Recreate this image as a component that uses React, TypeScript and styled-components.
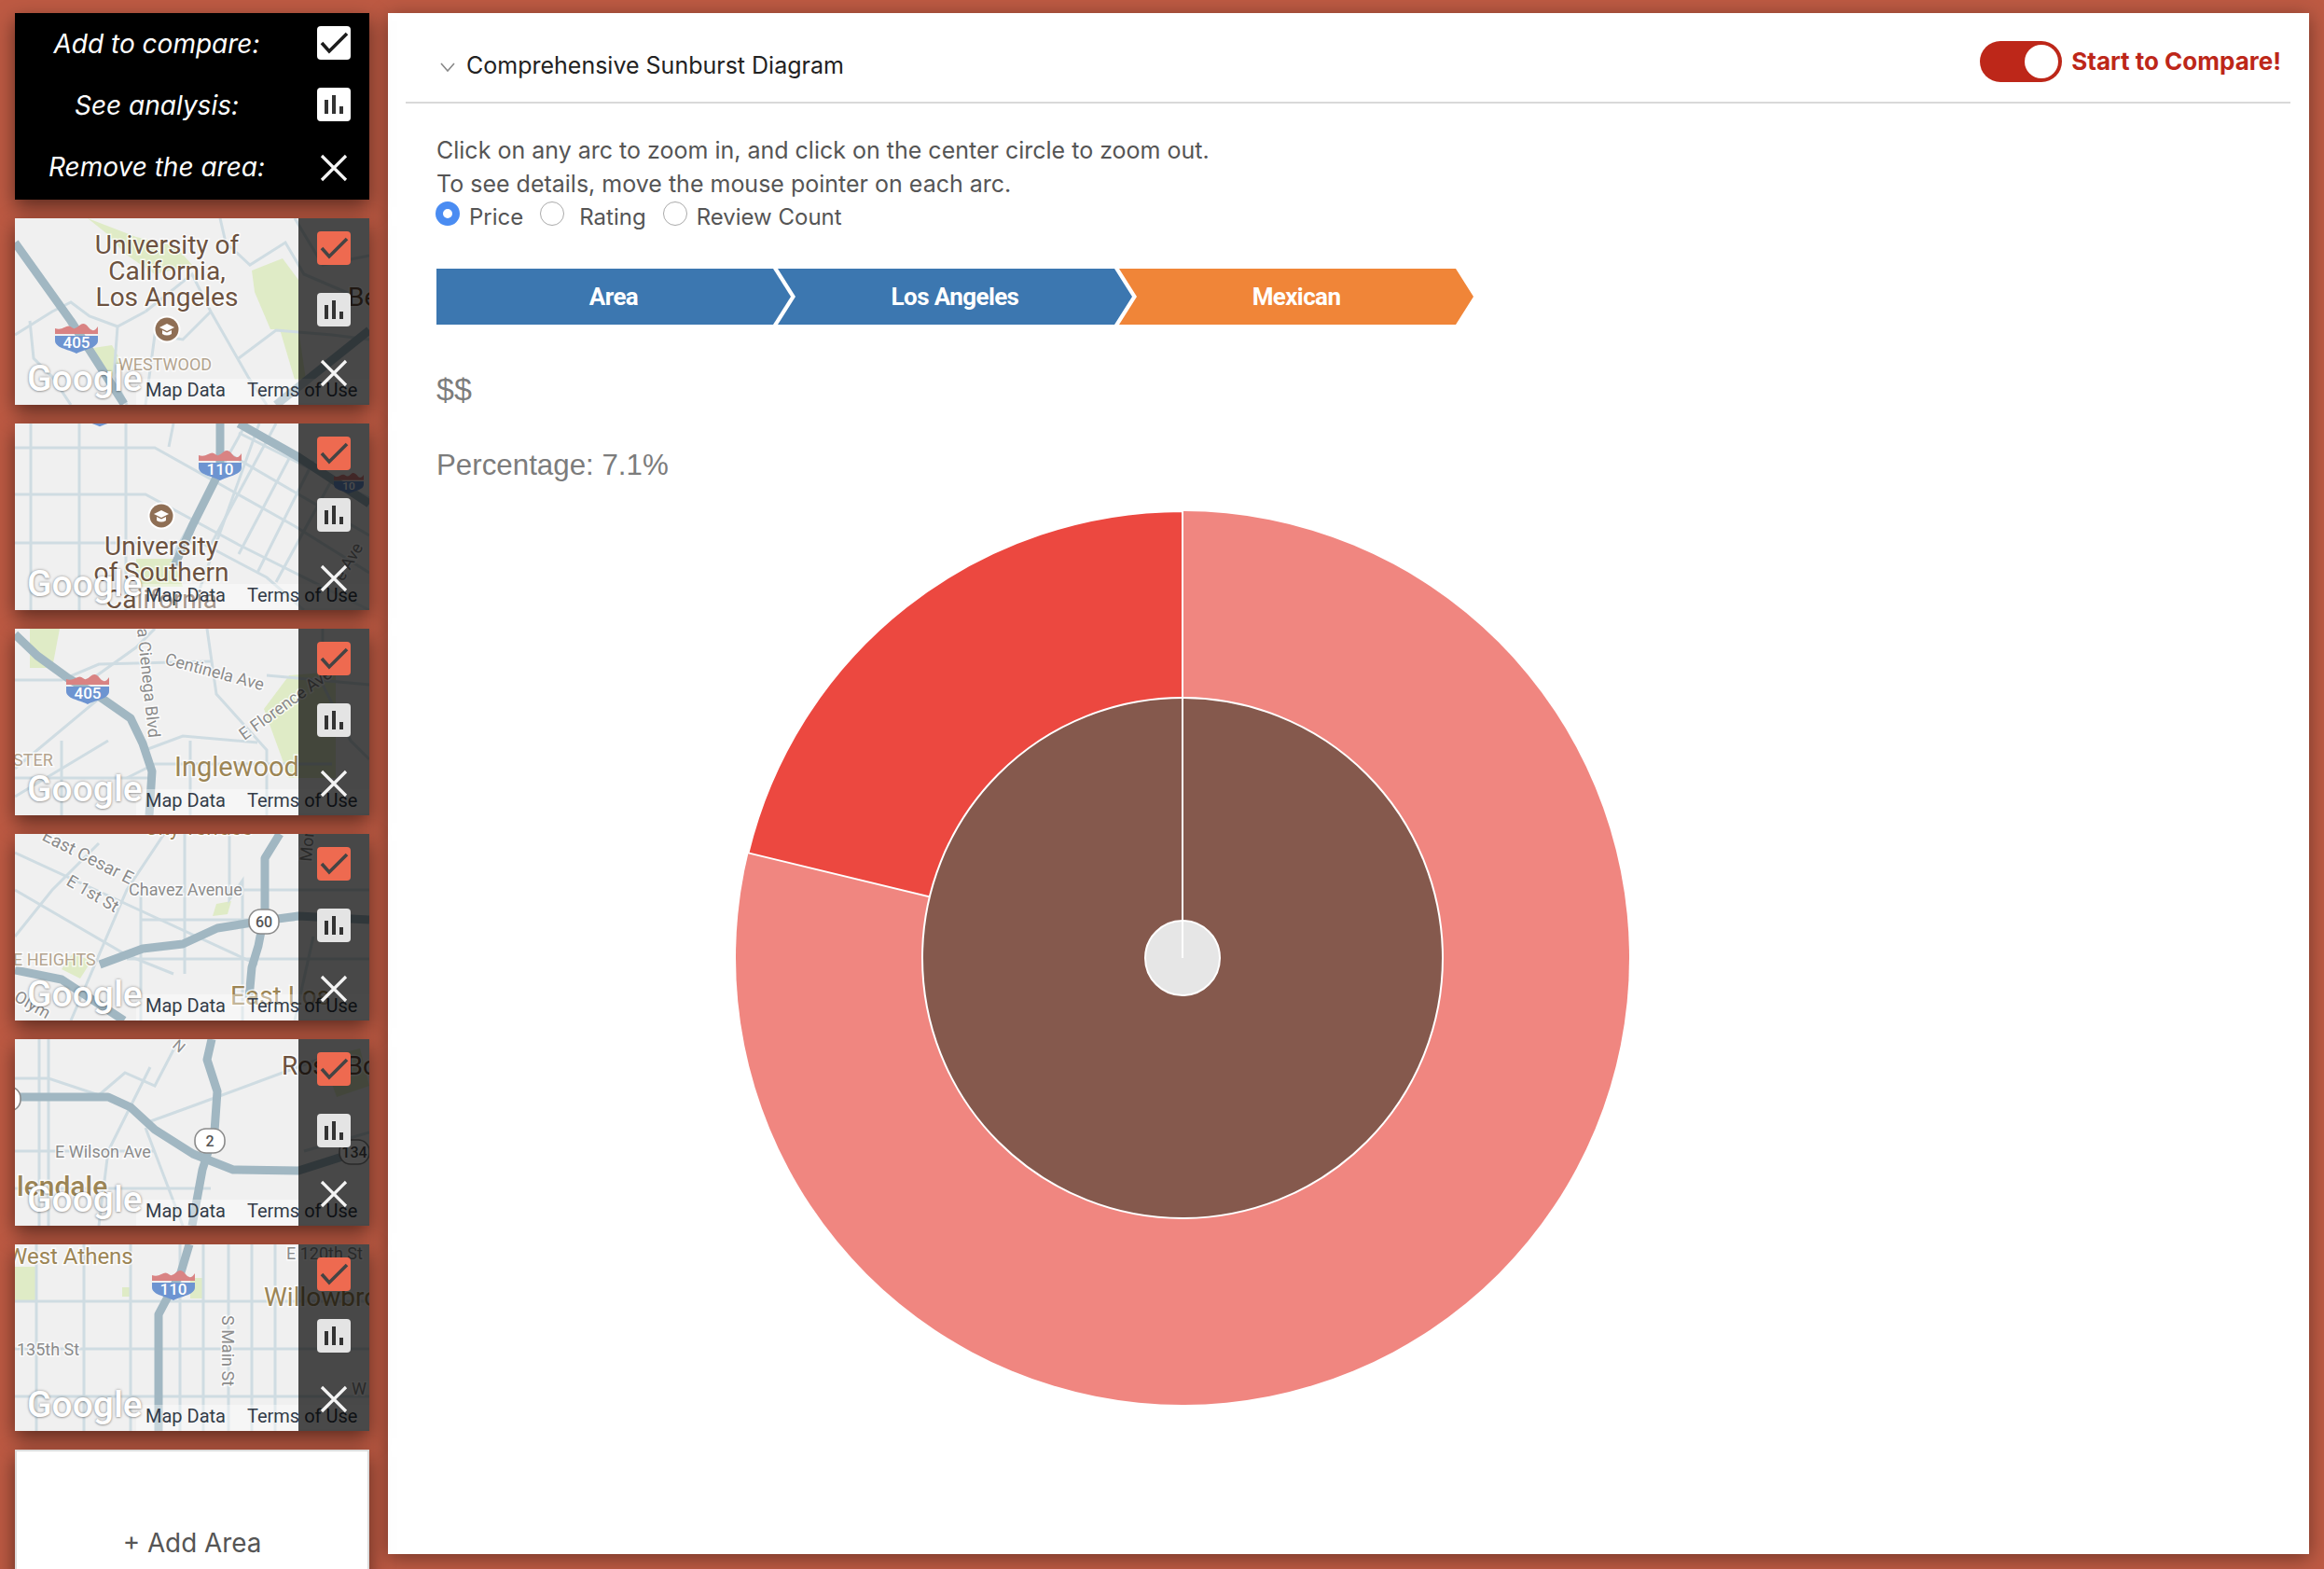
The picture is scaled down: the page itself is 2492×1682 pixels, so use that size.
import React from 'react';
import styled, { createGlobalStyle } from 'styled-components';

const GlobalStyle = createGlobalStyle`
  html, body { margin: 0; padding: 0; background: #bd5a43; }
  body { font-family: Inter, "Liberation Sans", sans-serif; }
`;

const Page = styled.div`
  width: 2492px;
  height: 1682px;
  overflow: hidden;
  box-sizing: border-box;
  padding: 14px 16px;
  display: flex;
  align-items: flex-start;
  gap: 20px;
  background: #bd5a43;
`;

const Sidebar = styled.aside`
  width: 380px;
  flex-shrink: 0;
  display: flex;
  flex-direction: column;
  gap: 20px;
`;

const Tile = styled.div`
  position: relative;
  width: 380px;
  height: 200px;
  flex-shrink: 0;
  overflow: hidden;
  box-shadow: 0 8px 20px rgba(0, 0, 0, 0.5);
`;

const Legend = styled(Tile)`
  background: #000;
  display: flex;
`;

const LegendLabels = styled.div`
  flex: 1;
  padding-top: 15px;
  display: flex;
  flex-direction: column;
  gap: 30px;
`;

const LegendLabel = styled.div`
  height: 36px;
  line-height: 36px;
  text-align: center;
  color: #fff;
  font-style: italic;
  font-size: 28px;
`;

const Actions = styled.div<{ $overlay?: boolean }>`
  width: 76px;
  box-sizing: border-box;
  padding-top: 14px;
  display: flex;
  flex-direction: column;
  align-items: center;
  gap: 30px;
  ${(p) =>
    p.$overlay &&
    `position: absolute;
     top: 0;
     right: 0;
     bottom: 0;
     background: rgba(0, 0, 0, 0.7);`}
`;

const ActionButton = styled.div<{ $bg: string }>`
  width: 36px;
  height: 36px;
  border-radius: 4px;
  background: ${(p) => p.$bg};
  flex-shrink: 0;
`;

const ActionIcon = styled.svg`
  display: block;
  width: 36px;
  height: 36px;
  flex-shrink: 0;
`;

const CloseGlyph = styled(ActionIcon)`
  margin-top: 2px;
`;

const AddCard = styled(Tile)`
  box-sizing: border-box;
  background: #fff;
  border: 2px solid #ddd;
  display: flex;
  align-items: center;
  justify-content: center;
  color: #555;
  font-size: 27.8px;
`;

const MapSvg = styled.svg`
  display: block;
  width: 380px;
  height: 200px;
  background: #f0f0f0;
`;

const Road = styled.path`
  fill: none;
  stroke: #cfdce2;
  stroke-width: 3;
`;

const Freeway = styled.path`
  fill: none;
  stroke: #a1b7c2;
  stroke-width: 9;
  stroke-linejoin: round;
`;

const Park = styled.path`
  fill: #dfebc6;
`;

const tones = {
  place: '#6c5240',
  town: '#9c8555',
  hood: '#b3a48e',
  street: '#8b8b8b',
};

const Label = styled.text<{ $size: number; $tone: keyof typeof tones; $heavy?: boolean }>`
  font-family: Roboto, "Liberation Sans", sans-serif;
  font-size: ${(p) => p.$size}px;
  font-weight: ${(p) => (p.$heavy ? 500 : 400)};
  fill: ${(p) => tones[p.$tone]};
  stroke: rgba(255, 255, 255, 0.75);
  stroke-width: 3px;
  paint-order: stroke;
`;

const ShieldText = styled.text<{ $size: number; $fill: string }>`
  font-family: Roboto, "Liberation Sans", sans-serif;
  font-weight: 500;
  font-size: ${(p) => p.$size}px;
  fill: ${(p) => p.$fill};
  text-anchor: middle;
`;

const GoogleMark = styled.span`
  position: absolute;
  left: 13px;
  bottom: 5px;
  font-family: Roboto, "Liberation Sans", sans-serif;
  font-size: 39px;
  font-weight: 500;
  line-height: 46px;
  color: #fff;
  text-shadow: 0 0 3px rgba(0, 0, 0, 0.4), 0 1px 2px rgba(0, 0, 0, 0.2);
`;

const MapFooter = styled.div`
  position: absolute;
  left: 130px;
  right: 0;
  bottom: 0;
  height: 28px;
  display: flex;
  gap: 23px;
  padding-left: 10px;
  background: rgba(255, 255, 255, 0.4);
  font-family: Roboto, "Liberation Sans", sans-serif;
  font-size: 20px;
  line-height: 25px;
  color: #333c48;
  white-space: nowrap;
`;

const Main = styled.main`
  width: 2060px;
  height: 1652px;
  flex-shrink: 0;
  box-sizing: border-box;
  padding: 0 20px 0 19px;
  background: #fff;
  box-shadow: 0 4px 20px rgba(0, 0, 0, 0.4);
`;

const PanelHeader = styled.header`
  height: 97px;
  box-sizing: border-box;
  border-bottom: 2px solid #d9d9d9;
  display: flex;
  justify-content: space-between;
  padding: 0 10px 0 37px;
`;

const PanelTitle = styled.div`
  display: flex;
  align-items: center;
  gap: 12px;
  height: 112px;
  color: #222;
  font-size: 25px;
`;

const Chevron = styled.svg`
  width: 16px;
  height: 10px;
  margin-top: 4px;
`;

const ToggleRow = styled.div`
  display: flex;
  align-items: flex-start;
  gap: 10px;
  padding-top: 30px;
  color: #bd2719;
  font-weight: 700;
  font-size: 26px;
  line-height: 44px;
`;

const Toggle = styled.div`
  width: 88px;
  height: 44px;
  box-sizing: border-box;
  border-radius: 22px;
  background: #bd2719;
  padding: 4px;
  display: flex;
  justify-content: flex-end;
`;

const ToggleKnob = styled.div`
  width: 36px;
  height: 36px;
  border-radius: 50%;
  background: #fff;
`;

const PanelBody = styled.div`
  padding: 32px 0 0 33px;
  color: #555;
  font-size: 25px;
`;

const HelpLine = styled.div`
  height: 36px;
  line-height: 36px;
`;

const RadioRow = styled.div`
  display: flex;
  align-items: center;
  height: 36px;
  margin-top: -1px;
  font-size: 24px;
`;

const Radio = styled.span<{ $checked?: boolean }>`
  width: 26px;
  height: 26px;
  box-sizing: border-box;
  border-radius: 50%;
  margin: -6px 0 0 -1px;
  border: ${(p) => (p.$checked ? '8px solid #4a8cf2' : '1.5px solid #aaa')};
  background: #fff;
  flex-shrink: 0;
`;

const RadioText = styled.span<{ $gap: number; $after: number }>`
  margin-left: ${(p) => p.$gap}px;
  margin-right: ${(p) => p.$after}px;
`;

const Trail = styled.div`
  display: flex;
  margin-top: 38px;
  height: 60px;
`;

const Crumb = styled.div<{ $bg: string; $first?: boolean }>`
  width: 380px;
  height: 60px;
  margin-left: ${(p) => (p.$first ? 0 : -14)}px;
  background: ${(p) => p.$bg};
  clip-path: ${(p) =>
    p.$first
      ? 'polygon(0 0, 361px 0, 380px 50%, 361px 100%, 0 100%)'
      : 'polygon(0 0, 361px 0, 380px 50%, 361px 100%, 0 100%, 19px 50%)'};
  display: flex;
  align-items: center;
  justify-content: center;
  color: #fff;
  font-family: Roboto, "Liberation Sans", sans-serif;
  font-weight: 700;
  font-size: 26px;
  letter-spacing: -0.6px;
`;

const Stat = styled.div<{ $size: number; $gap: number }>`
  margin-top: ${(p) => p.$gap}px;
  height: 36px;
  line-height: 36px;
  font-family: "Liberation Sans", Arial, sans-serif;
  font-size: ${(p) => p.$size}px;
  color: #7c7c7c;
`;

const Chart = styled.svg`
  display: block;
  width: 960px;
  height: 960px;
  margin: 30px 0 0 320px;
`;

function CheckIcon({ stroke }: { stroke: string }) {
  return (
    <ActionIcon viewBox="0 0 36 36">
      <path d="M5 18 L13 27 L32 8" fill="none" stroke={stroke} strokeWidth="3.6" />
    </ActionIcon>
  );
}

function BarsIcon() {
  return (
    <ActionIcon viewBox="0 0 36 36">
      <path d="M8 13h4v15H8zM16 8h4v20h-4zM24 20h4v8h-4z" fill="#333" />
    </ActionIcon>
  );
}

function CloseIcon() {
  return (
    <CloseGlyph viewBox="0 0 36 36">
      <path d="M5 5 L31 31 M31 5 L5 31" fill="none" stroke="#f4f4f4" strokeWidth="3.2" />
    </CloseGlyph>
  );
}

function ActionStack({ overlay }: { overlay?: boolean }) {
  return (
    <Actions $overlay={overlay}>
      <ActionButton $bg={overlay ? '#ee6a50' : '#fff'}>
        <CheckIcon stroke={overlay ? '#444' : '#1c1c1c'} />
      </ActionButton>
      <ActionButton $bg={overlay ? '#e4e4e4' : '#fff'}>
        <BarsIcon />
      </ActionButton>
      <CloseIcon />
    </Actions>
  );
}

function Interstate({ x, y, label, w = 46 }: { x: number; y: number; label: string; w?: number }) {
  return (
    <g transform={`translate(${x} ${y}) scale(${w / 46})`}>
      <path d="M0 5 Q5 7 10 4 T18 4 T26 2 T36 4 T46 3 V11 H0Z" fill="#d98383" />
      <path d="M0 13 H46 V18 C46 26 33 27 23 32 C13 27 0 26 0 18Z" fill="#6d94d1" />
      <ShieldText x="23" y="26" $size={17} $fill="#fff">
        {label}
      </ShieldText>
    </g>
  );
}

function StateRoute({ x, y, label }: { x: number; y: number; label: string }) {
  return (
    <g>
      <rect x={x - 16} y={y - 13} width="32" height="26" rx="12" fill="#fff" stroke="#8a8a8a" strokeWidth="1.6" />
      <ShieldText x={x} y={y + 6} $size={16} $fill="#555">
        {label}
      </ShieldText>
    </g>
  );
}

function CampusPin({ x, y }: { x: number; y: number }) {
  return (
    <g transform={`translate(${x} ${y})`}>
      <circle r="14.5" fill="#fff" />
      <circle r="12.5" fill="#8f6f55" />
      <path d="M-8 -2 L0 -6 L8 -2 L0 2Z" fill="#fff" />
      <path d="M-5 1 V5 Q0 8 5 5 V1 L0 3.5Z" fill="#fff" />
    </g>
  );
}

function WestwoodMap() {
  return (
    <MapSvg viewBox="0 0 380 200">
      <Park d="M78 0 L98 16 L118 38 L150 60 L190 50 L172 30 L130 20 Z" />
      <Park d="M254 56 L287 43 L304 66 L304 119 L274 119 L257 79Z" />
      <Park d="M84 139 L104 136 L117 159 L97 176Z" />
      <Park d="M284 119 L304 119 L312 173 L300 173Z" />
      <Road d="M220 0 L226 26 L252 50 L290 26 L310 60 L380 90" />
      <Road d="M0 125 L40 100 L60 90 L80 105 L110 116 L140 100" />
      <Road d="M16 110 L20 150 L40 170 L60 200" />
      <Road d="M110 116 L106 170 L120 200" />
      <Road d="M140 100 L190 60 L210 100 L250 170 L270 200" />
      <Road d="M210 100 L180 130 L150 125 L140 200" />
      <Road d="M240 150 L280 120 L340 125 L380 130" />
      <Road d="M300 0 L330 50 L380 40" />
      <Freeway d="M0 26 L60 110 L117 199" />
      <Freeway d="M280 200 L380 120" />
      <Label x="163" y="38" textAnchor="middle" $size={28} $tone="place">University of</Label>
      <Label x="163" y="66" textAnchor="middle" $size={28} $tone="place">California,</Label>
      <Label x="163" y="94" textAnchor="middle" $size={28} $tone="place">Los Angeles</Label>
      <Label x="357" y="94" $size={28} $tone="place">Be</Label>
      <CampusPin x={163} y={119} />
      <Interstate x={43} y={113} label="405" />
      <Label x="161" y="163" textAnchor="middle" $size={18} $tone="hood">WESTWOOD</Label>
    </MapSvg>
  );
}

function UscMap() {
  return (
    <MapSvg viewBox="0 0 380 200">
      <Park d="M130 145 L170 145 L180 175 L130 175Z" />
      <Road d="M0 26 L150 26 L300 110 L380 160" />
      <Road d="M0 76 L140 76 L240 130 L380 200" />
      <Road d="M0 128 L200 128 L270 165 L310 200" />
      <Road d="M17 0 V200" />
      <Road d="M69 0 V200" />
      <Road d="M119 0 V200" />
      <Road d="M170 0 L165 25" />
      <Road d="M248 0 L170 140" />
      <Road d="M262 0 L190 200" />
      <Road d="M280 0 L210 130" />
      <Road d="M298 30 L240 140" />
      <Road d="M320 40 L260 160" />
      <Road d="M340 60 L280 170" />
      <Road d="M240 10 L380 80" />
      <Road d="M225 30 L380 120" />
      <Freeway d="M220 0 V50 L190 110 L170 155" />
      <Freeway d="M240 0 L304 36 L380 86" />
      <Interstate x={75} y={-19} label="10" w={32} />
      <Interstate x={197} y={29} label="110" />
      <Interstate x={342} y={53} label="10" w={32} />
      <CampusPin x={157} y={99} />
      <Label x="157" y="141" textAnchor="middle" $size={28} $tone="place">University</Label>
      <Label x="157" y="169" textAnchor="middle" $size={28} $tone="place">of Southern</Label>
      <Label x="157" y="198" textAnchor="middle" $size={28} $tone="place">California</Label>
      <Label transform="translate(352 170) rotate(-60)" $size={18} $tone="street">e Ave</Label>
    </MapSvg>
  );
}

function InglewoodMap() {
  return (
    <MapSvg viewBox="0 0 380 200">
      <Park d="M16 0 L48 0 L40 42 L16 42Z" />
      <Park d="M267 86 L294 50 L344 46 L344 160 L294 160Z" />
      <Road d="M0 55 L50 55 L90 38 L210 35" />
      <Road d="M150 0 L130 20 L60 70" />
      <Road d="M206 0 L216 70 L270 130 L270 200" />
      <Road d="M100 120 L0 180" />
      <Road d="M90 75 L0 150" />
      <Road d="M50 120 V200" />
      <Road d="M140 130 L180 115 L260 122" />
      <Road d="M188 120 V200" />
      <Road d="M0 160 L150 160" />
      <Road d="M120 160 L150 145 L340 145" />
      <Road d="M270 50 L380 60" />
      <Road d="M330 0 V60 L360 120 L380 140" />
      <Freeway d="M0 6 L24 29 L57 53 L91 73 L124 96 L137 123 L147 153 L144 200" />
      <Interstate x={55} y={49} label="405" />
      <Label transform="translate(131 0) rotate(84)" $size={18} $tone="street">a Cienega Blvd</Label>
      <Label transform="translate(160 38) rotate(15)" $size={18} $tone="street">Centinela Ave</Label>
      <Label transform="translate(246 120) rotate(-36)" $size={18} $tone="street">E Florence Ave</Label>
      <Label x="-2" y="147" $size={18} $tone="hood">STER</Label>
      <Label x="171" y="158" $size={29} $tone="town">Inglewood</Label>
    </MapSvg>
  );
}

function EastLaMap() {
  return (
    <MapSvg viewBox="0 0 380 200">
      <Park d="M62 128 L82 136 L70 155 L50 145Z" />
      <Park d="M216 75 L232 72 L228 86 L212 88Z" />
      <Road d="M0 20 L130 80 L260 140" />
      <Road d="M0 60 L120 130 L170 150" />
      <Road d="M0 110 L40 60 L90 10" />
      <Road d="M60 200 L120 60 L160 0" />
      <Road d="M135 60 V200" />
      <Road d="M182 0 V150" />
      <Road d="M230 0 V70 L244 50 L244 200" />
      <Road d="M135 92 H300" />
      <Road d="M120 134 H380" />
      <Road d="M245 60 H380" />
      <Road d="M320 110 L300 200" />
      <Freeway d="M284 0 L268 26 L268 84 L261 120 L254 143 L251 176" />
      <Freeway d="M91 140 L137 123 L180 118 L217 101 L267 93 L304 88 L380 92" />
      <Freeway d="M0 146 L50 156 L117 200" />
      <StateRoute x={267} y={94} label="60" />
      <Label x="197" y="1" textAnchor="middle" $size={22} $tone="town">City Terrace</Label>
      <Label transform="translate(28 6) rotate(27)" $size={19} $tone="street">East Cesar E</Label>
      <Label x="122" y="66" $size={18} $tone="street">Chavez Avenue</Label>
      <Label transform="translate(54 54) rotate(30)" $size={18} $tone="street">E 1st St</Label>
      <Label transform="translate(318 30) rotate(-85)" $size={18} $tone="street">Mon</Label>
      <Label x="-2" y="141" $size={18} $tone="hood">E HEIGHTS</Label>
      <Label transform="translate(-2 178) rotate(30)" $size={18} $tone="street">Olym</Label>
      <Label x="231" y="183" $size={28} $tone="town">East Los</Label>
    </MapSvg>
  );
}

function GlendaleMap() {
  return (
    <MapSvg viewBox="0 0 380 200">
      <Park d="M330 20 L370 10 L380 50 L345 62Z" />
      <Road d="M26 0 V200" />
      <Road d="M36 0 V200" />
      <Road d="M0 42 H36 L90 60 L118 36 L150 50 L176 0" />
      <Road d="M145 30 L100 120 L90 200" />
      <Road d="M140 90 L195 70 L330 20" />
      <Road d="M140 95 L180 200" />
      <Road d="M0 120 H150" />
      <Road d="M0 160 H210" />
      <Road d="M310 120 L380 100" />
      <Freeway d="M0 62 H100 L124 73 L150 97 L191 123 L234 140 L304 141 L351 126" />
      <Freeway d="M211 0 L206 22 L217 56 L214 99 L201 140 L190 200" />
      <StateRoute x={209} y={109} label="2" />
      <StateRoute x={-10} y={64} label="" />
      <StateRoute x={364} y={121} label="134" />
      <Label transform="translate(168 8) rotate(40)" $size={16} $tone="street">N</Label>
      <Label x="43" y="127" $size={18} $tone="street">E Wilson Ave</Label>
      <Label x="286" y="38" $size={28} $tone="place">Rose Bo</Label>
      <Label x="2" y="168" $size={30} $tone="town" $heavy>lendale</Label>
    </MapSvg>
  );
}

function WillowbrookMap() {
  return (
    <MapSvg viewBox="0 0 380 200">
      <Park d="M0 24 H22 V60 H0Z" />
      <Park d="M115 46 H124 V56 H115Z" />
      <Park d="M188 36 H202 V58 H188Z" />
      <Road d="M23 0 V200" />
      <Road d="M74 0 V200" />
      <Road d="M124 0 V200" />
      <Road d="M177 0 V200" />
      <Road d="M202 0 V200" />
      <Road d="M229 0 V200" />
      <Road d="M254 0 V200" />
      <Road d="M279 0 V200" />
      <Road d="M0 61 H380" />
      <Road d="M0 112 H380" />
      <Road d="M0 163 H380" />
      <Freeway d="M187 0 L178 30 L154 75 L154 200" />
      <Interstate x={147} y={28} label="110" />
      <Label x="-8" y="21" $size={24} $tone="town">West Athens</Label>
      <Label x="291" y="16" $size={18} $tone="street">E 120th St</Label>
      <Label x="267" y="66" $size={28} $tone="town">Willowbrook</Label>
      <Label x="2" y="119" $size={18} $tone="street">135th St</Label>
      <Label transform="translate(222 76) rotate(90)" $size={18} $tone="street">S Main St</Label>
      <Label x="361" y="161" $size={18} $tone="street">W</Label>
    </MapSvg>
  );
}

const MAPS = [WestwoodMap, UscMap, InglewoodMap, EastLaMap, GlendaleMap, WillowbrookMap];

function polar(r: number, deg: number) {
  const a = (deg * Math.PI) / 180;
  return `${480 + r * Math.sin(a)} ${480 - r * Math.cos(a)}`;
}

function wedge(r: number, from: number, to: number) {
  const large = to - from > 180 ? 1 : 0;
  return `M480 480 L${polar(r, from)} A${r} ${r} 0 ${large} 1 ${polar(r, to)} Z`;
}

function Sunburst() {
  return (
    <Chart viewBox="0 0 960 960">
      <circle cx="480" cy="480" r="479" fill="#f08680" />
      <path d={wedge(479, -76.4, 0)} fill="#ec4840" stroke="#fff" strokeWidth="2" />
      <circle cx="480" cy="480" r="279" fill="#85594d" stroke="#fff" strokeWidth="2" />
      <circle cx="480" cy="480" r="40" fill="#e6e6e6" stroke="#fff" strokeWidth="2" />
      <path d="M480 480 V1" stroke="#fff" strokeWidth="2" />
    </Chart>
  );
}

export default function App() {
  return (
    <Page>
      <GlobalStyle />
      <Sidebar>
        <Legend>
          <LegendLabels>
            <LegendLabel>Add to compare:</LegendLabel>
            <LegendLabel>See analysis:</LegendLabel>
            <LegendLabel>Remove the area:</LegendLabel>
          </LegendLabels>
          <ActionStack />
        </Legend>
        {MAPS.map((AreaMap, i) => (
          <Tile key={i}>
            <AreaMap />
            <MapFooter>
              <span>Map Data</span>
              <span>Terms of Use</span>
            </MapFooter>
            <GoogleMark>Google</GoogleMark>
            <ActionStack overlay />
          </Tile>
        ))}
        <AddCard>+ Add Area</AddCard>
      </Sidebar>
      <Main>
        <PanelHeader>
          <PanelTitle>
            <Chevron viewBox="0 0 16 10">
              <path d="M1 1 L8 9 L15 1" fill="none" stroke="#888" strokeWidth="1.6" />
            </Chevron>
            Comprehensive Sunburst Diagram
          </PanelTitle>
          <ToggleRow>
            <Toggle>
              <ToggleKnob />
            </Toggle>
            Start to Compare!
          </ToggleRow>
        </PanelHeader>
        <PanelBody>
          <HelpLine>Click on any arc to zoom in, and click on the center circle to zoom out.</HelpLine>
          <HelpLine>To see details, move the mouse pointer on each arc.</HelpLine>
          <RadioRow>
            <Radio $checked />
            <RadioText $gap={10} $after={19}>Price</RadioText>
            <Radio />
            <RadioText $gap={16} $after={19}>Rating</RadioText>
            <Radio />
            <RadioText $gap={10} $after={0}>Review Count</RadioText>
          </RadioRow>
          <Trail>
            <Crumb $bg="#3c77b0" $first>Area</Crumb>
            <Crumb $bg="#3c77b0">Los Angeles</Crumb>
            <Crumb $bg="#f08538">Mexican</Crumb>
          </Trail>
          <Stat $size={34} $gap={51}>$$</Stat>
          <Stat $size={31.3} $gap={46}>Percentage: 7.1%</Stat>
          <Sunburst />
        </PanelBody>
      </Main>
    </Page>
  );
}
